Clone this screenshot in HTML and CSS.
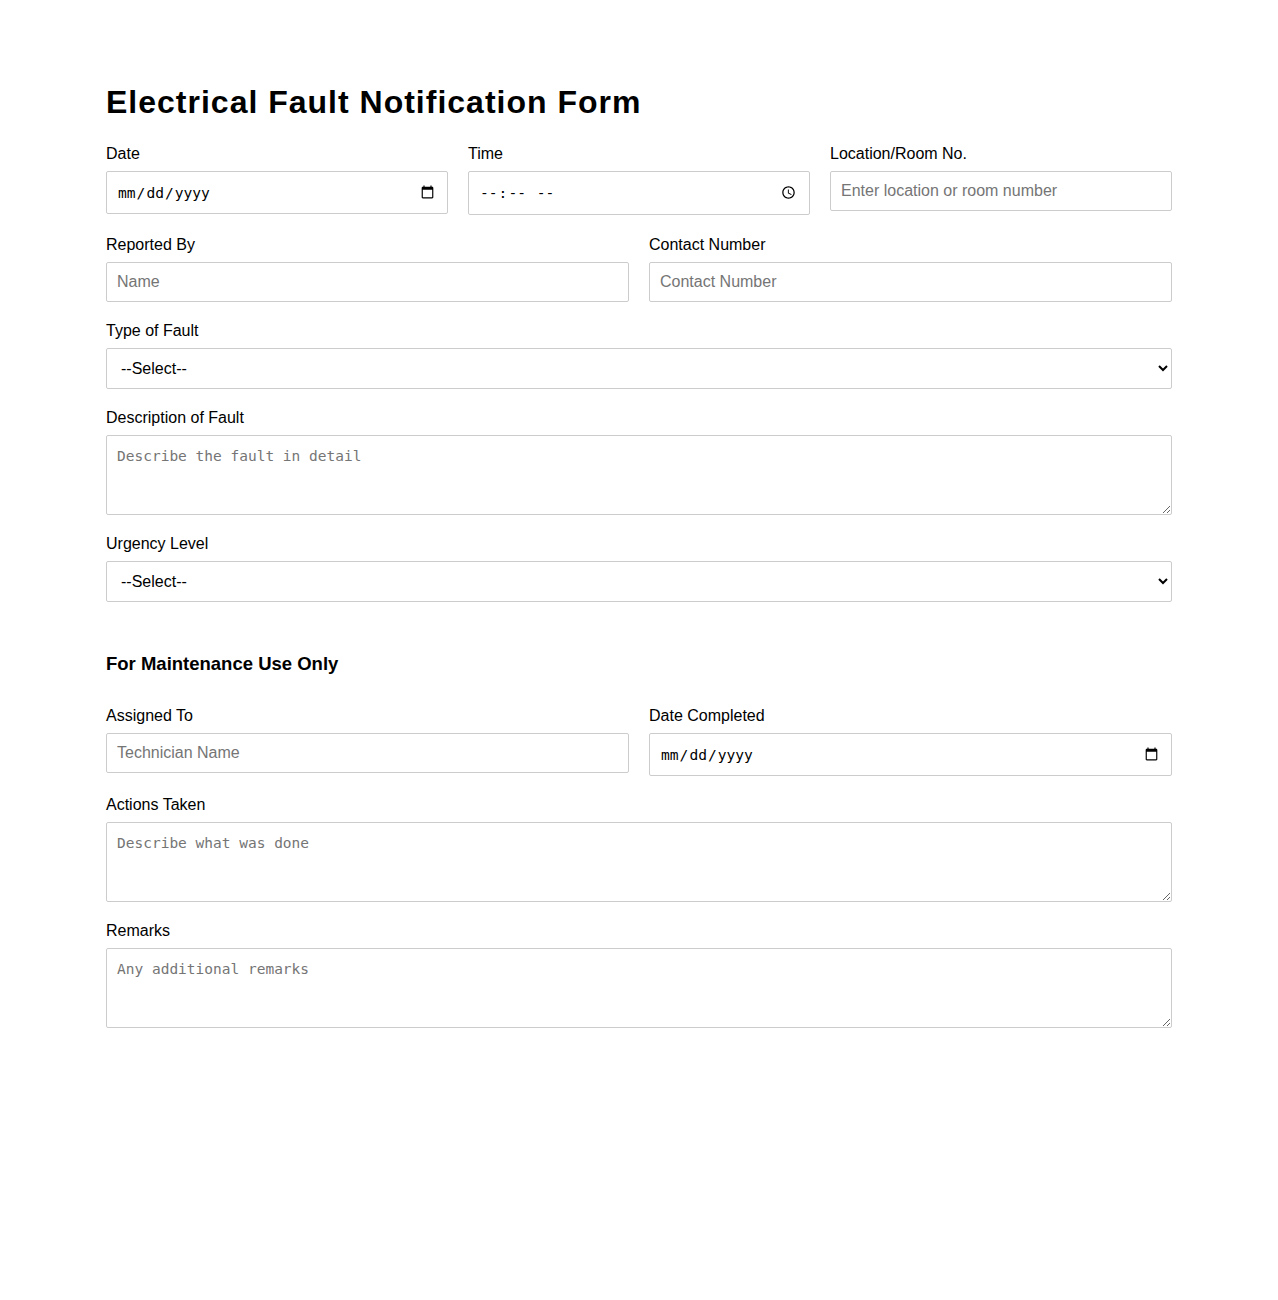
FILE: index.html
```html
<!DOCTYPE html>
<html lang="en">
<head>
<meta charset="UTF-8">
<title>Electrical Fault Notification Form</title>
<link rel="stylesheet" href="styles.css">
</head>
<body>
<div class="container">
  <h1 class="title">Electrical Fault Notification Form</h1>
  <form>
    <div class="row three first-row">
      <div class="field">
        <label for="date">Date</label>
        <input type="date" id="date" class="ctl ctl-date">
      </div>
      <div class="field">
        <label for="time">Time</label>
        <input type="time" id="time" class="ctl ctl-date ctl-time">
      </div>
      <div class="field">
        <label for="loc">Location/Room No.</label>
        <input type="text" id="loc" class="ctl ctl-text" placeholder="Enter location or room number">
      </div>
    </div>
    <div class="row two">
      <div class="field">
        <label for="name">Reported By</label>
        <input type="text" id="name" class="ctl ctl-text" placeholder="Name">
      </div>
      <div class="field">
        <label for="contact">Contact Number</label>
        <input type="text" id="contact" class="ctl ctl-text" placeholder="Contact Number">
      </div>
    </div>
    <div class="field">
      <label for="type">Type of Fault</label>
      <select id="type" class="ctl ctl-select">
        <option>--Select--</option>
        <option>Power Outage</option>
        <option>Short Circuit</option>
        <option>Faulty Wiring</option>
        <option>Other</option>
      </select>
    </div>
    <div class="field">
      <label for="desc">Description of Fault</label>
      <textarea id="desc" class="ctl ctl-area" placeholder="Describe the fault in detail"></textarea>
    </div>
    <div class="field">
      <label for="urg">Urgency Level</label>
      <select id="urg" class="ctl ctl-select">
        <option>--Select--</option>
        <option>Low</option>
        <option>Medium</option>
        <option>High</option>
      </select>
    </div>

    <h3 class="section-title">For Maintenance Use Only</h3>

    <div class="row two">
      <div class="field">
        <label for="tech">Assigned To</label>
        <input type="text" id="tech" class="ctl ctl-text" placeholder="Technician Name">
      </div>
      <div class="field">
        <label for="done">Date Completed</label>
        <input type="date" id="done" class="ctl ctl-date">
      </div>
    </div>
    <div class="field">
      <label for="actions">Actions Taken</label>
      <textarea id="actions" class="ctl ctl-area" placeholder="Describe what was done"></textarea>
    </div>
    <div class="field">
      <label for="remarks">Remarks</label>
      <textarea id="remarks" class="ctl ctl-area" placeholder="Any additional remarks"></textarea>
    </div>
  </form>
</div>
</body>
</html>
```
FILE: styles.css
```css
body {
  margin: 0;
  font-family: "Liberation Sans", Arial, sans-serif;
  color: #000;
  background: #fff;
}
.container {
  max-width: 1066px;
  margin: 0 auto;
  padding-top: 63px;
  padding-bottom: 40px;
}
.title {
  font-size: 32px;
  font-weight: bold;
  letter-spacing: 1px;
  margin: 21px 0 24px;
}
.row {
  display: grid;
  gap: 20px;
  align-items: start;
}
.row.three {
  grid-template-columns: 1fr 1fr 1fr;
}
.row.two {
  grid-template-columns: 1fr 1fr;
}
.field {
  margin-bottom: 20px;
}
.first-row .field {
  margin-bottom: 21px;
}
.field label {
  display: block;
  font-size: 16px;
  margin-bottom: 8px;
}
.ctl {
  display: block;
  width: 100%;
  box-sizing: border-box;
  padding: 10px;
  border: 1px solid #ccc;
  border-radius: 2px;
  background: #fff;
}
.ctl-text,
.ctl-select {
  font-family: "Liberation Sans", Arial, sans-serif;
  font-size: 16px;
}
.ctl-date {
  font-size: 14.6px;
  height: 43px;
}
.ctl-time {
  height: 44px;
}
.ctl-area {
  height: 80px;
  padding-top: 12px;
  font-family: monospace;
  font-size: 14.5px;
  resize: vertical;
}
.section-title {
  font-size: 18.5px;
  margin: 51px 0 32px;
}
```
